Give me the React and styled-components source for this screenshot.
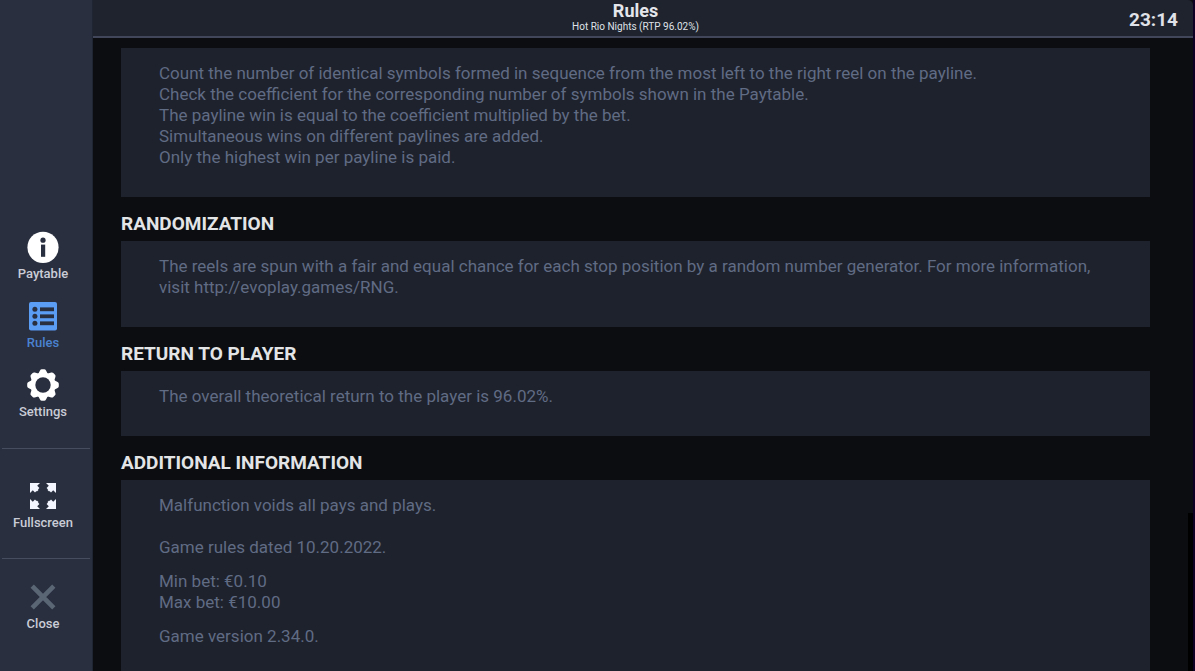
import React from 'react';
import styled, { createGlobalStyle } from 'styled-components';

const sections = [
	{
		id: 'payline',
		groups: [
			[
				'Count the number of identical symbols formed in sequence from the most left to the right reel on the payline.',
				'Check the coefficient for the corresponding number of symbols shown in the Paytable.',
				'The payline win is equal to the coefficient multiplied by the bet.',
				'Simultaneous wins on different paylines are added.',
				'Only the highest win per payline is paid.',
			],
		],
	},
	{
		id: 'randomization',
		title: 'RANDOMIZATION',
		groups: [
			[
				'The reels are spun with a fair and equal chance for each stop position by a random number generator. For more information, visit http://evoplay.games/RNG.',
			],
		],
	},
	{
		id: 'rtp',
		title: 'RETURN TO PLAYER',
		groups: [['The overall theoretical return to the player is 96.02%.']],
	},
	{
		id: 'additional',
		title: 'ADDITIONAL INFORMATION',
		groups: [
			['Malfunction voids all pays and plays.', '', 'Game rules dated 10.20.2022.'],
			['Min bet: €0.10', 'Max bet: €10.00'],
			['Game version 2.34.0.'],
		],
	},
];

export default function App() {
	return (
		<Page>
			<GlobalStyle />
			<Sidebar>
				<Menu>
					<MenuButton type="button">
						<InfoIcon />
						Paytable
					</MenuButton>
					<MenuButton type="button" $active aria-current="page">
						<RulesIcon />
						Rules
					</MenuButton>
					<MenuButton type="button">
						<GearIcon />
						Settings
					</MenuButton>
				</Menu>
				<FullscreenBox>
					<MenuButton type="button">
						<FullscreenIcon />
						Fullscreen
					</MenuButton>
				</FullscreenBox>
				<CloseBox>
					<MenuButton type="button">
						<CloseIcon />
						Close
					</MenuButton>
				</CloseBox>
			</Sidebar>
			<Content>
				<Header>
					<Clock>23:14</Clock>
					<Titles>
						<Title>Rules</Title>
						<Subtitle>Hot Rio Nights (RTP 96.02%)</Subtitle>
					</Titles>
				</Header>
				<ScrollArea>
					<Sections>
						{sections.map(({ id, title, groups }) => (
							<section key={id}>
								{title && <SectionTitle>{title}</SectionTitle>}
								<Panel>
									{groups.map((lines) => (
										<Group key={lines[0]}>
											{lines.map((line) => (
												<Line key={line}>{line}</Line>
											))}
										</Group>
									))}
								</Panel>
							</section>
						))}
					</Sections>
					<Track>
						<Thumb />
					</Track>
				</ScrollArea>
			</Content>
		</Page>
	);
}

function InfoIcon() {
	return (
		<Icon viewBox="0 0 32 32">
			<circle cx="16" cy="16.4" r="15.6" fill="#fff" />
			<circle cx="16" cy="9.2" r="2.6" fill="#292f3f" />
			<rect x="14" y="13.6" width="4.2" height="12.2" fill="#292f3f" />
		</Icon>
	);
}

function RulesIcon() {
	return (
		<Icon viewBox="0 0 32 32">
			<rect x="2" y="2" width="28" height="28.6" rx="2" fill="#5b9cf5" />
			{[9.3, 16.3, 23.3].map((y) => (
				<g key={y} fill="#292f3f">
					<circle cx="7.9" cy={y} r="2.5" />
					<rect x="13" y={y - 1.9} width="14" height="3.8" />
				</g>
			))}
		</Icon>
	);
}

function GearIcon() {
	return (
		<Icon viewBox="0 0 32 32">
			{[0, 45, 90, 135, 180, 225, 270, 315].map((angle) => (
				<path
					key={angle}
					d="M11 5.2L13 1.4Q13.6 .2 14.8 .2h2.4Q18.4 .2 19 1.4L21 5.2V9H11z"
					fill="#fff"
					transform={`rotate(${angle} 16 16)`}
				/>
			))}
			<circle cx="16" cy="16" r="12.4" fill="#fff" />
			<circle cx="16" cy="16" r="7.7" fill="#292f3f" />
		</Icon>
	);
}

function FullscreenIcon() {
	return (
		<Icon viewBox="0 0 32 32">
			{[0, 90, 180, 270].map((angle) => (
				<path
					key={angle}
					d="M3 3h10L10.2 5.8l2.2 2.2L11 9.4l.5.5-1.6 1.6-.5-.5L8 12.4l-2.2-2.2L3 13z"
					fill="#f4f6ff"
					transform={`rotate(${angle} 16 16)`}
				/>
			))}
		</Icon>
	);
}

function CloseIcon() {
	return (
		<Icon viewBox="0 0 32 32">
			<path d="M5.2 5.2l21.6 21.6M26.8 5.2L5.2 26.8" stroke="#5b6675" strokeWidth="4.6" />
		</Icon>
	);
}

const GlobalStyle = createGlobalStyle`
	* {
		box-sizing: border-box;
	}

	body {
		margin: 0;
		background-color: #0d0024;
		font-family: Roboto, "Liberation Sans", sans-serif;
	}
`;

const Page = styled.div`
	display: flex;
	height: 100vh;
	padding-right: 2px;
	overflow: hidden;
`;

const Sidebar = styled.aside`
	display: flex;
	flex: none;
	flex-direction: column;
	width: 93px;
	padding: 0 2px;
	background-color: #292f3f;
	border-right: 1px solid #1f2532;
`;

const Menu = styled.nav`
	display: flex;
	flex-direction: column;
	gap: 16px;
	margin-top: auto;
	padding-bottom: 26px;
`;

const FullscreenBox = styled.div`
	padding: 31px 0 25px;
	border-top: 1px solid #464d5e;
`;

const CloseBox = styled.div`
	padding: 22px 0 37px;
	border-top: 1px solid #464d5e;
`;

const MenuButton = styled.button`
	display: flex;
	flex-direction: column;
	align-items: center;
	gap: 1px;
	width: 82px;
	padding: 0;
	border: 0;
	background: none;
	color: ${({ $active }) => ($active ? '#4b82cf' : '#c9ccd6')};
	font-family: inherit;
	font-size: 13px;
	font-weight: 500;
	line-height: 20px;
	cursor: pointer;
`;

const Icon = styled.svg`
	width: 32px;
	height: 32px;
`;

const Content = styled.main`
	display: flex;
	flex: 1;
	flex-direction: column;
	min-width: 0;
	background-color: #0b0d10;
`;

const Header = styled.header`
	display: flex;
	flex: none;
	flex-direction: row-reverse;
	align-items: center;
	height: 38px;
	padding-right: 15px;
	background-color: #1f232d;
	border-bottom: 2px solid #42465a;
	border-top-right-radius: 5px;
`;

const Titles = styled.div`
	flex: 1;
	padding: 0 0 2px 49px;
	text-align: center;
`;

const Title = styled.h1`
	margin: 0;
	color: #e4e6ec;
	font-size: 18px;
	font-weight: 700;
	line-height: 20px;
`;

const Subtitle = styled.p`
	margin: 0;
	color: #dfe1e8;
	font-size: 10px;
	line-height: 12px;
`;

const Clock = styled.time`
	padding-top: 2px;
	color: #e0e2e9;
	font-size: 19px;
	font-weight: 700;
`;

const ScrollArea = styled.div`
	display: flex;
	flex: 1;
	min-height: 0;
	overflow: hidden;
`;

const Sections = styled.div`
	flex: 1;
	min-width: 0;
	padding: 10px 38px 0 28px;
`;

const SectionTitle = styled.h2`
	margin: 0;
	padding: 15px 0 5px;
	color: #e3e4e6;
	font-size: 19px;
	font-weight: 700;
	line-height: 24px;
`;

const Panel = styled.div`
	padding: 15px 38px 29px;
	background-color: #1e222c;
`;

const Group = styled.div`
	& + & {
		margin-top: 13px;
	}
`;

const Line = styled.p`
	min-height: 21px;
	margin: 0;
	color: #606b84;
	font-size: 17px;
	line-height: 21px;
`;

const Track = styled.div`
	display: flex;
	flex-direction: column;
	justify-content: flex-end;
	width: 5px;
`;

const Thumb = styled.div`
	height: 25%;
	background-color: #000;
`;
